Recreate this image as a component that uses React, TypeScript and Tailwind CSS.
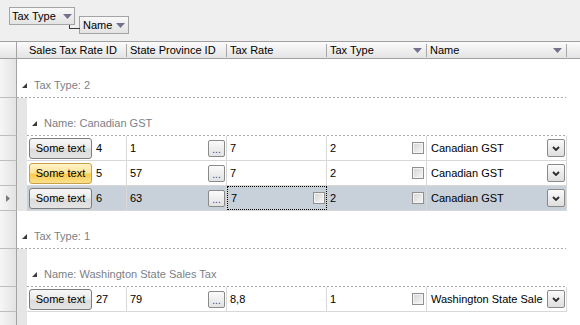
import React from "react";

const Tri = () => (
  <svg width="5" height="5" viewBox="0 0 5 5" className="shrink-0">
    <polygon points="0,5 5,0 5,5" fill="#3a3a3a" />
  </svg>
);

const DropArrow = () => (
  <svg width="9" height="5" viewBox="0 0 9 5" className="shrink-0">
    <polygon points="0,0 9,0 4.5,5" fill="#72728e" />
  </svg>
);

const RowHead = ({ h, sel, last }: { h: string; sel?: boolean; last?: boolean }) => (
  <div
    className={`${h} w-[17px] shrink-0 border-r border-r-[#a3a3a3] ${last ? "" : "border-b border-b-[#bdbdbd]"} bg-[linear-gradient(to_right,#f6f6f6,#e3e3e3)] flex items-center justify-center`}
  >
    {sel && (
      <svg width="4" height="7" viewBox="0 0 4 7">
        <polygon points="0,0 4,3.5 0,7" fill="#7a7a7a" />
      </svg>
    )}
  </div>
);

const Dotted = () => (
  <div className="h-[1px] w-full bg-[linear-gradient(to_right,#a8a8a8_50%,transparent_50%)] bg-[length:4px_1px] bg-repeat-x" />
);

const Indent = () => <div className="w-[10px] shrink-0 bg-[#e6e6e6]" />;

const GroupRow1 = ({ label, h }: { label: string; h: string }) => (
  <div className={`flex ${h}`}>
    <RowHead h={h} />
    <div className="w-[549px] flex flex-col">
      <div className="flex-1 flex items-end pb-[5px] pl-[5px] gap-[7px] text-[#7b7f87]">
        <div className="mb-[4px]">
          <Tri />
        </div>
        <span className="leading-[14px]">{label}</span>
      </div>
      <Dotted />
    </div>
  </div>
);

const GroupRow2 = ({ label, h }: { label: string; h: string }) => (
  <div className={`flex ${h}`}>
    <RowHead h={h} />
    <Indent />
    <div className="w-[539px] flex flex-col">
      <div className="flex-1 flex items-end pb-[5px] pl-[5px] gap-[7px] text-[#7b7f87]">
        <div className="mb-[4px]">
          <Tri />
        </div>
        <span className="leading-[14px]">{label}</span>
      </div>
      <Dotted />
    </div>
  </div>
);

const SomeButton = ({ hot }: { hot?: boolean }) => (
  <div
    className={`ml-[2px] w-[63px] h-[21px] shrink-0 rounded-[3px] border flex items-center justify-center text-black ${
      hot
        ? "border-[#c9a04a] bg-[linear-gradient(to_bottom,#fff3c8_0%,#fde59a_45%,#f9cc4f_55%,#fbe08e_100%)]"
        : "border-[#7d7d7d] bg-[linear-gradient(to_bottom,#f7f7f7_0%,#ececec_45%,#dcdcdc_55%,#e4e4e4_100%)]"
    }`}
  >
    Some text
  </div>
);

const Ellipsis = () => (
  <div className="w-[17px] h-[17px] shrink-0 mr-[1px] rounded-[2px] border border-[#8a8a8a] bg-[linear-gradient(to_bottom,#fbfbfb,#e2e2e2)] flex items-end justify-center text-[#40407a] leading-[11px] text-[10px] pb-[1px]">
    ...
  </div>
);

const Check = () => (
  <div className="w-[12px] h-[12px] shrink-0 border border-[#8f8f8f] bg-[#f4f4f4] p-[1px]">
    <div className="w-full h-full bg-[linear-gradient(to_bottom_right,#d8d8d8,#f4f4f4)]" />
  </div>
);

const Combo = () => (
  <div className="w-[18px] h-[18px] shrink-0 mr-[1px] rounded-[2px] border border-[#8a8a8a] bg-[linear-gradient(to_bottom,#fbfbfb,#dedede)] flex items-center justify-center">
    <svg width="8" height="5" viewBox="0 0 8 5">
      <path d="M1 1 L4 4 L7 1" stroke="#2a2a2a" strokeWidth="1.8" fill="none" />
    </svg>
  </div>
);

const DataRow = ({
  id,
  prov,
  rate,
  type,
  name,
  hot,
  sel,
}: {
  id: string;
  prov: string;
  rate: string;
  type: string;
  name: string;
  hot?: boolean;
  sel?: boolean;
}) => (
  <div className="flex h-[25px]">
    <RowHead h="h-[25px]" sel={sel} />
    <Indent />
    <div className={`w-[540px] flex border-b border-[#d8d8d8] ${sel ? "bg-[#c8d0da]" : "bg-white"}`}>
      <div className="w-[100px] shrink-0 border-r border-[#d8d8d8] flex items-center gap-[4px]">
        <SomeButton hot={hot} />
        <span>{id}</span>
      </div>
      <div className="w-[100px] shrink-0 border-r border-[#d8d8d8] flex items-center justify-between pl-[3px]">
        <span>{prov}</span>
        <Ellipsis />
      </div>
      <div
        className={`w-[100px] shrink-0 flex items-center justify-between pl-[3px] ${
          sel ? "border border-dotted border-black pr-[1px]" : "border-r border-[#d8d8d8]"
        }`}
      >
        <span>{rate}</span>
        {sel && <Check />}
      </div>
      <div className="w-[100px] shrink-0 border-r border-[#d8d8d8] flex items-center justify-between pl-[3px] pr-[2px]">
        <span>{type}</span>
        <Check />
      </div>
      <div className="w-[140px] shrink-0 border-r border-[#d8d8d8] flex items-center justify-between pl-[4px]">
        <span className="whitespace-nowrap">{name}</span>
        <Combo />
      </div>
    </div>
  </div>
);

const HeadSep = () => <div className="w-[1px] h-[13px] bg-[#a8a8a8] shrink-0" />;

export default function App() {
  return (
    <div
      className="w-[580px] h-[325px] overflow-hidden bg-white flex flex-col text-[11px] text-black"
      style={{ fontFamily: '"Liberation Sans", Arial, sans-serif' }}
    >
      {/* group panel */}
      <div className="h-[41px] shrink-0 bg-[#efefef] flex">
        <div className="ml-[9px] mt-[7px] relative">
          <div className="w-[66px] h-[18px] border border-[#a4a4a4] bg-[linear-gradient(to_bottom,#f8f8f8,#e3e3e3)] flex items-center pl-[2px] pr-[2px] justify-between">
            <span>Tax Type</span>
            <DropArrow />
          </div>
          <div className="absolute left-[60px] top-[18px] w-[11px] h-[4px] border-l border-b border-[#3a3a3a]" />
        </div>
        <div className="ml-[4px] mt-[16px] w-[50px] h-[18px] border border-[#a4a4a4] bg-[linear-gradient(to_bottom,#f8f8f8,#e3e3e3)] flex items-center pl-[3px] pr-[3px] justify-between">
          <span>Name</span>
          <DropArrow />
        </div>
      </div>

      {/* header */}
      <div className="h-[18px] shrink-0 flex border-t border-b border-[#a0a0a0] bg-[linear-gradient(to_bottom,#fbfbfb,#e4e4e4)]">
        <div className="w-[17px] shrink-0 border-r border-[#a3a3a3]" />
        <div className="w-[109px] shrink-0 flex items-center pl-[12px]">Sales Tax Rate ID</div>
        <div className="flex items-center">
          <HeadSep />
        </div>
        <div className="w-[99px] shrink-0 flex items-center pl-[3px]">State Province ID</div>
        <div className="flex items-center">
          <HeadSep />
        </div>
        <div className="w-[99px] shrink-0 flex items-center pl-[3px]">Tax Rate</div>
        <div className="flex items-center">
          <HeadSep />
        </div>
        <div className="w-[99px] shrink-0 flex items-center justify-between pl-[3px] pr-[4px]">
          <span>Tax Type</span>
          <DropArrow />
        </div>
        <div className="flex items-center">
          <HeadSep />
        </div>
        <div className="w-[139px] shrink-0 flex items-center justify-between pl-[3px] pr-[4px]">
          <span>Name</span>
          <DropArrow />
        </div>
        <div className="flex items-center">
          <HeadSep />
        </div>
      </div>

      {/* body */}
      <div className="flex-1 flex flex-col">
        <GroupRow1 label="Tax Type: 2" h="h-[39px]" />
        <GroupRow2 label="Name: Canadian GST" h="h-[38px]" />
        <DataRow id="4" prov="1" rate="7" type="2" name="Canadian GST" />
        <DataRow id="5" prov="57" rate="7" type="2" name="Canadian GST" hot />
        <DataRow id="6" prov="63" rate="7" type="2" name="Canadian GST" sel />
        <GroupRow1 label="Tax Type: 1" h="h-[38px]" />
        <GroupRow2 label="Name: Washington State Sales Tax" h="h-[38px]" />
        <DataRow id="27" prov="79" rate="8,8" type="1" name="Washington State Sale" />
        <div className="flex flex-1">
          <RowHead h="h-full" last />
          <Indent />
        </div>
      </div>
    </div>
  );
}
